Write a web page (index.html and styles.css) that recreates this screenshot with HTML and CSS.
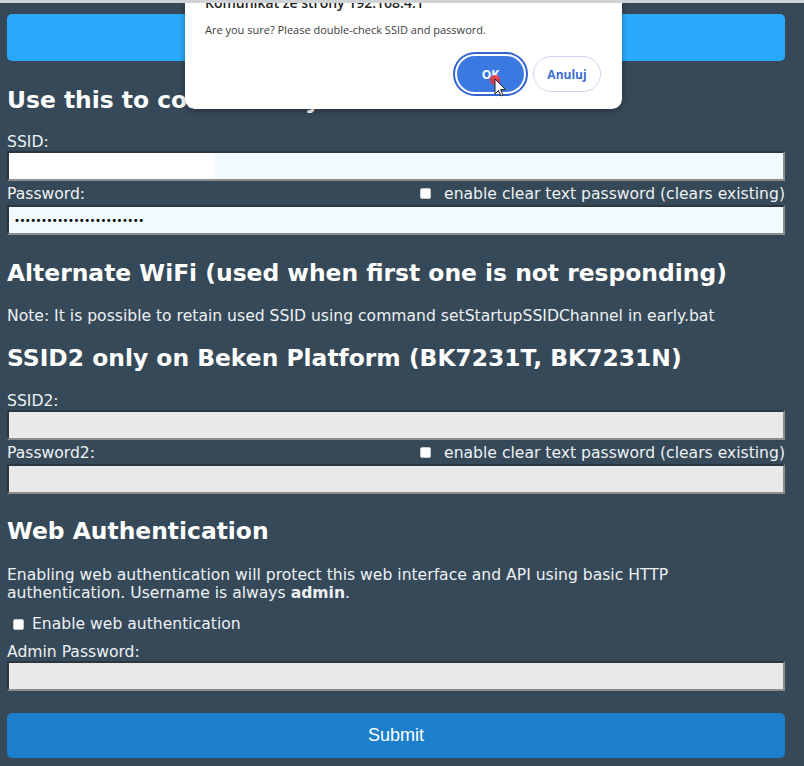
FILE: index.html
```html
<!DOCTYPE html>
<html lang="en">
<head>
  <meta charset="UTF-8" />
  <title>WiFi</title>
  <link rel="stylesheet" href="styles.css">
</head>
<body>
  <div class="page">
    <div class="topbtn"></div>

    <h3 class="first">Use this to connect to your WiFi</h3>
    <label class="lbl" for="ssid">SSID:</label>
    <input class="field redacted" type="text" id="ssid" />
    <div class="row">
      <label for="pass">Password:</label>
      <label class="clear"><input type="checkbox" /> enable clear text password (clears existing)</label>
    </div>
    <input class="field light" type="password" id="pass" value="aaaaaaaaaaaaaaaaaaaaaaaa" />

    <h3>Alternate WiFi (used when first one is not responding)</h3>
    <p class="note">Note: It is possible to retain used SSID using command setStartupSSIDChannel in early.bat</p>
    <h3 class="ssid2">SSID2 only on Beken Platform (BK7231T, BK7231N)</h3>
    <label class="lbl l2" for="ssid2">SSID2:</label>
    <input class="field" type="text" id="ssid2" />
    <div class="row">
      <label for="pass2">Password2:</label>
      <label class="clear"><input type="checkbox" /> enable clear text password (clears existing)</label>
    </div>
    <input class="field" type="password" id="pass2" />

    <h3 class="auth">Web Authentication</h3>
    <p class="desc">Enabling web authentication will protect this web interface and API using basic HTTP authentication. Username is always <b>admin</b>.</p>
    <label class="enable"><input type="checkbox" /> Enable web authentication</label>
    <label class="lbl l3" for="admin">Admin Password:</label>
    <input class="field" type="password" id="admin" />

    <button class="submit">Submit</button>
  </div>

  <div class="dialog">
    <div class="dlg-title">Komunikat ze strony 192.168.4.1</div>
    <div class="dlg-msg">Are you sure? Please double-check SSID and password.</div>
    <div class="dlg-btns">
      <button class="ok">OK</button>
      <button class="cancel">Anuluj</button>
    </div>
  </div>

  <svg class="cursor" width="24" height="26" viewBox="0 0 24 26">
    <circle cx="6" cy="6" r="5" fill="#e8343a" opacity="0.9" />
    <path d="M6 5 L6 20 L9.5 16.5 L12 22 L14 21 L11.6 15.6 L16.5 15.6 Z" fill="#fff" stroke="#222" stroke-width="1" />
  </svg>
</body>
</html>
```

FILE: styles.css
```css
body {
  margin: 0;
  background: #364959;
  color: #eef2f4;
  font-family: "DejaVu Sans", Verdana, sans-serif;
  border-top: 3px solid #cfd3d6;
  height: 763px;
  overflow: hidden;
  position: relative;
}

.page {
  width: 778px;
  margin-left: 7px;
}

.topbtn {
  height: 47px;
  margin-top: 11px;
  background: #29a9fc;
  border-radius: 5px;
}

h3 {
  font-size: 23.4px;
  font-weight: bold;
  line-height: 28px;
  margin: 24px 0 0;
  color: #fff;
  white-space: nowrap;
}

h3.first {
  margin-top: 25px;
}

.lbl {
  display: block;
  font-size: 15.6px;
  line-height: 19px;
  margin-top: 19px;
  margin-bottom: -1px;
}

.lbl.l2 {
  margin-top: 20px;
}

.lbl.l3 {
  margin-top: 9px;
}

.field {
  display: block;
  box-sizing: border-box;
  width: 778px;
  height: 30px;
  margin: 0;
  padding: 0 6px;
  background: #e9e9e9;
  border-top: 2px solid #2c3640;
  border-left: 2px solid #2c3640;
  border-bottom: 2px solid #8d8d8d;
  border-right: 2px solid #8d8d8d;
  font-size: 13px;
  font-family: "DejaVu Sans", Verdana, sans-serif;
  outline: none;
}

.field.light {
  background: #f0faff;
  font-size: 10px;
  letter-spacing: -0.5px;
  padding-left: 5px;
}

.field.redacted {
  background: linear-gradient(to right, #fff 206px, #f0faff 206px);
}

.row {
  display: flex;
  justify-content: space-between;
  align-items: center;
  height: 24px;
  padding-top: 1px;
  box-sizing: border-box;
  font-size: 15.6px;
}

.clear {
  display: flex;
  align-items: center;
}

input[type="checkbox"] {
  appearance: none;
  width: 11px;
  height: 11px;
  margin: 0 13px 0 0;
  background: #fff;
  border: 1px solid #c9c9c9;
  border-radius: 2px;
}

.note {
  font-size: 15.6px;
  line-height: 18px;
  margin: 20px 0 0;
  white-space: nowrap;
}

h3.ssid2 {
  margin-top: 19px;
}

h3.auth {
  margin-top: 23px;
}

.desc {
  font-size: 15.6px;
  line-height: 18px;
  margin: 21px 0 0;
  width: 720px;
}

.enable {
  display: flex;
  align-items: center;
  height: 20px;
  margin-top: 12px;
  padding-left: 6px;
  font-size: 15.6px;
}

.enable input[type="checkbox"] {
  margin-right: 8px;
}

.submit {
  display: block;
  width: 778px;
  height: 45px;
  margin-top: 22px;
  background: #1b7fcb;
  color: #fff;
  border: none;
  border-radius: 5px;
  font-family: "Liberation Sans", Arial, sans-serif;
  font-size: 18px;
}

/* okno alert */
.dialog {
  position: absolute;
  left: 185px;
  top: -20px;
  width: 437px;
  height: 126px;
  background: #fff;
  border-radius: 0 0 10px 10px;
  box-shadow: 0 2px 6px rgba(0, 0, 0, 0.35);
  font-family: "Open Sans", sans-serif;
  color: #333;
}

.dlg-title {
  position: absolute;
  left: 20px;
  top: 10px;
  font-size: 14px;
  font-weight: 600;
  color: #222;
}

.dlg-msg {
  position: absolute;
  left: 20px;
  top: 39px;
  font-size: 11px;
  color: #3c3c3c;
}

.dlg-btns {
  position: absolute;
  right: 21px;
  top: 73px;
  display: flex;
  align-items: center;
  gap: 9px;
}

.dlg-btns button {
  height: 36px;
  border-radius: 18px;
  font-family: "Open Sans", sans-serif;
  font-size: 12px;
  font-weight: bold;
}

.ok {
  width: 67px;
  background: #3a78e2;
  color: #fff;
  border: none;
  box-shadow: 0 0 0 2px #fff, 0 0 0 4px #3163d1;
}

.cancel {
  width: 68px;
  background: #fff;
  color: #3c6dd6;
  border: 1px solid #cdd7ec;
}

.cursor {
  position: absolute;
  left: 489px;
  top: 71px;
}
```
